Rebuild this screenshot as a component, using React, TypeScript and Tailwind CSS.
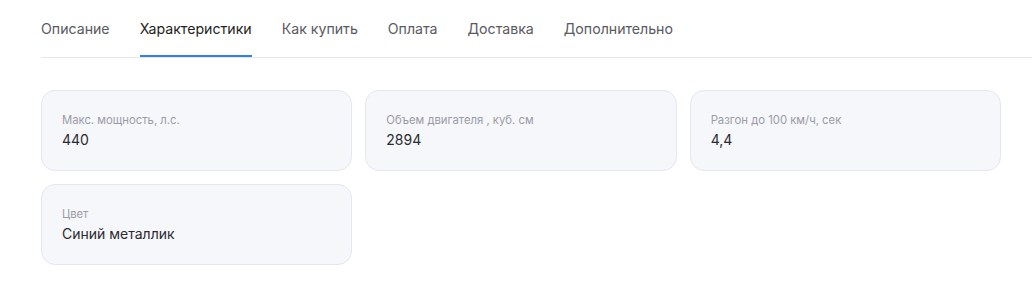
import { useState } from "react";

const tabs = ["Описание", "Характеристики", "Как купить", "Оплата", "Доставка", "Дополнительно"];

const specs = [
  { label: "Макс. мощность, л.с.", value: "440" },
  { label: "Объем двигателя , куб. см", value: "2894" },
  { label: "Разгон до 100 км/ч, сек", value: "4,4" },
  { label: "Цвет", value: "Синий металлик" },
];

export default function App() {
  const [active, setActive] = useState(1);

  return (
    <div className="min-h-[291px] bg-white pl-[41px] pt-[19px] font-['Inter','Noto_Sans',sans-serif]">
      <div className="flex gap-[30px] border-b border-[#e6e6f0]">
        {tabs.map((t, i) => (
          <button
            key={t}
            onClick={() => setActive(i)}
            className={
              "border-b-2 pb-[16px] text-[14.15px] leading-5 " +
              (i === active ? "border-[#2f80ed] text-[#1f1f24]" : "border-transparent text-[#5a5a61]")
            }
          >
            {t}
          </button>
        ))}
      </div>

      <div className="mt-[32px] grid w-[960px] grid-cols-3 gap-[13px]">
        {specs.map((s) => (
          <div
            key={s.label}
            className="h-[81px] rounded-[14px] border border-[#e5e7f0] bg-[#f6f7fb] px-[20px] pt-[21px]"
          >
            <div className="text-[11.3px] leading-4 text-[#9b9ba6]">{s.label}</div>
            <div className="mt-[2px] text-[14px] leading-5 text-[#2a2a30]">{s.value}</div>
          </div>
        ))}
      </div>
    </div>
  );
}
